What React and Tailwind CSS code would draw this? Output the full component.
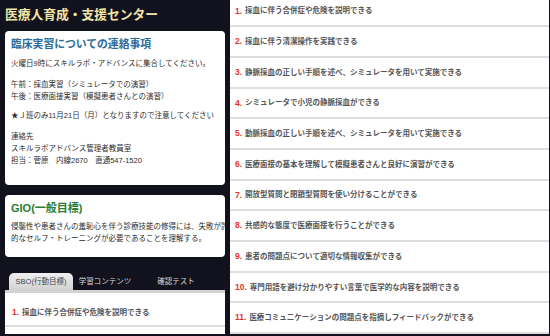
import React from "react";

const items = [
  "採血に伴う合併症や危険を説明できる",
  "採血に伴う清潔操作を実践できる",
  "静脈採血の正しい手順を述べ、シミュレータを用いて実施できる",
  "シミュレータで小児の静脈採血ができる",
  "動脈採血の正しい手順を述べ、シミュレータを用いて実施できる",
  "医療面接の基本を理解して模擬患者さんと良好に演習ができる",
  "開放型質問と閉鎖型質問を使い分けることができる",
  "共感的な態度で医療面接を行うことができる",
  "患者の問題点について適切な情報収集ができる",
  "専門用語を避け分かりやすい言葉で医学的な内容を説明できる",
  "医療コミュニケーションの問題点を指摘しフィードバックができる",
  "",
];

export default function App() {
  return (
    <div className="w-[550px] h-[336px] bg-[#11121e] flex pb-[2px] pr-[1px] overflow-hidden font-['Liberation_Sans','Noto_Sans_CJK_JP',sans-serif]">
      {/* Left column */}
      <div className="w-[230px] shrink-0 px-[5px] flex flex-col">
        <div className="h-[31px] pt-[6px] text-[12.75px] leading-[18px] font-bold text-[#f1e5a6] whitespace-nowrap">
          医療人育成・支援センター
        </div>
        <div className="h-[154px] bg-white rounded-[4px] px-[6px] pt-[6px] overflow-hidden">
          <div className="text-[10.8px] leading-[14px] font-bold text-[#2b6a99] whitespace-nowrap">
            臨床実習についての連絡事項
          </div>
          <div className="mt-[7px] text-[7.5px] leading-[12px] text-[#2e2e2e] whitespace-nowrap">
            <p>火曜日9時にスキルラボ・アドバンスに集合してください。</p>
            <p className="mt-[9px]">午前：採血実習（シミュレータでの演習）</p>
            <p>午後：医療面接実習（模擬患者さんとの演習）</p>
            <p className="mt-[7px]">★Ｊ班のみ11月21日（月）となりますので注意してください</p>
            <p className="mt-[9px]">連絡先</p>
            <p>スキルラボアドバンス管理者教員室</p>
            <p>担当：菅原　内線2670　直通547-1520</p>
          </div>
        </div>
        <div className="mt-[10px] h-[62px] bg-white rounded-[4px] pl-[6px] pt-[6px] overflow-hidden">
          <div className="text-[11px] leading-[14px] font-bold text-[#2a7d33] whitespace-nowrap">
            GIO(一般目標)
          </div>
          <div className="mt-[6px] text-[7.5px] leading-[12px] text-[#2e2e2e] whitespace-nowrap">
            <p>侵襲性や患者さんの羞恥心を伴う診療技能の修得には、失敗が許</p>
            <p>的なセルフ・トレーニングが必要であることを理解する。</p>
          </div>
        </div>
        <div className="mt-[16px] h-[17px] flex items-stretch text-[7.5px] whitespace-nowrap">
          <div className="ml-[4px] w-[64px] rounded-t-[5px] bg-gradient-to-b from-[#f0f0f0] to-[#d2d2d2] text-[#444] flex items-center justify-center">
            SBO(行動目標)
          </div>
          <div className="w-[64px] text-[#d6d6d6] flex items-center justify-center">学習コンテンツ</div>
          <div className="w-[78px] text-[#d6d6d6] flex items-center justify-center">確認テスト</div>
        </div>
        <div className="flex-1 bg-white border-t-[3px] border-[#d3d3d3] overflow-hidden">
          <div className="h-[34px] border-b-2 border-[#dedede] pt-[13px] pl-[7px] text-[7.5px] leading-[12px] font-bold text-[#555] whitespace-nowrap">
            <span className="text-[8.5px] text-[#e2332b] mr-[3px]">1.</span>
            採血に伴う合併症や危険を説明できる
          </div>
        </div>
      </div>

      {/* Right column */}
      <div className="flex-1 bg-white overflow-hidden">
        <div className="-mt-[3.4px]">
          {items.map((t, i) => (
            <div
              key={i}
              className="h-[30.7px] border-b-2 border-[#dedede] flex items-center pl-[5px] text-[7.5px] font-bold text-[#555] whitespace-nowrap"
            >
              {t && (
                <>
                  <span className="text-[8.5px] text-[#e2332b] mr-[3px]">{i + 1}.</span>
                  <span>{t}</span>
                </>
              )}
            </div>
          ))}
        </div>
      </div>
    </div>
  );
}
